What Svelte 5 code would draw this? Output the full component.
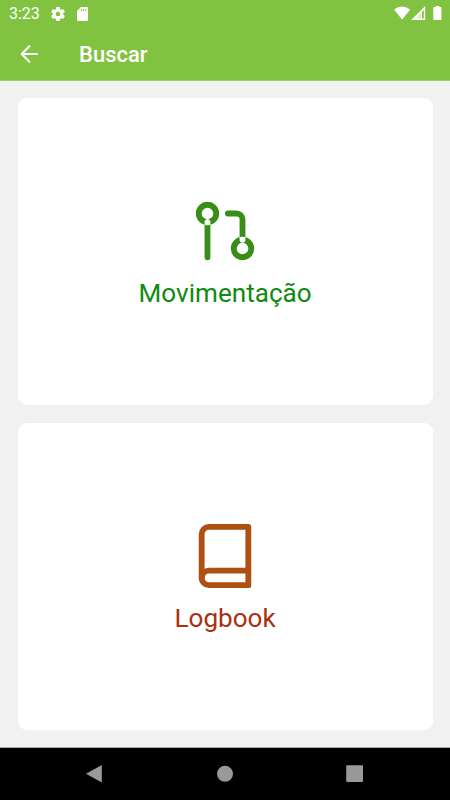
<script lang="ts">
    const title = "Buscar";
    const time = "3:23";
</script>

<div class="screen">
    <header>
        <div class="status">
            <span class="time">{time}</span>
            <svg class="gear" width="16" height="16" viewBox="1 1 22 22">
                <path
                    d="M19.14 12.94c.04-.3.06-.61.06-.94s-.02-.64-.07-.94l2.03-1.58a.49.49 0 0 0 .12-.61l-1.92-3.32a.49.49 0 0 0-.59-.22l-2.39.96a7 7 0 0 0-1.62-.94l-.36-2.54a.48.48 0 0 0-.48-.41h-3.84a.48.48 0 0 0-.47.41l-.36 2.54a7.4 7.4 0 0 0-1.62.94l-2.39-.96a.48.48 0 0 0-.59.22L2.74 8.87a.47.47 0 0 0 .12.61l2.03 1.58a6 6 0 0 0-.02 1.88l-2.03 1.58a.49.49 0 0 0-.12.61l1.92 3.32c.12.22.37.29.59.22l2.39-.96c.5.38 1.03.7 1.62.94l.36 2.54c.05.24.24.41.48.41h3.84c.24 0 .44-.17.47-.41l.36-2.54a7 7 0 0 0 1.62-.94l2.39.96c.22.08.47 0 .59-.22l1.92-3.32a.47.47 0 0 0-.12-.61zM12 15.2a3.2 3.2 0 1 1 0-6.4 3.2 3.2 0 0 1 0 6.4z"
                />
            </svg>
            <svg class="sd" width="11" height="14" viewBox="0 0 11 14">
                <path
                    fill-rule="evenodd"
                    d="M4 0h6a1 1 0 0 1 1 1v12a1 1 0 0 1-1 1H1a1 1 0 0 1-1-1V4zM4 2v2.2h1V2zM6.1 2v2.2h1V2zM8.2 2v2.2h1V2z"
                />
            </svg>
            <svg class="signals" width="48" height="15" viewBox="0 0 48 15">
                <path d="M0 3.6Q8 -2.6 16.2 3.6L8.1 13.6z" />
                <path fill-rule="evenodd" d="M31.2 0v14h-14zM29.8 4v8.6h-1.9V6z" />
                <path class="weak" d="M27 6.5v6.1h-4.6z" />
                <path d="M40.1 1H41.6V0h3.8v1h1.2q.8 0 .8.8v11.4q0 .8-.8.8h-6.5q-.8 0-.8-.8V1.8q0-.8.8-.8z" />
            </svg>
        </div>
        <div class="toolbar">
            <svg class="back" width="18" height="18" viewBox="0 0 18 18">
                <path d="M17 9H1.7M9.4 1.2L1.7 9l7.7 7.8" />
            </svg>
            <h1>{title}</h1>
        </div>
    </header>

    <main>
        <button class="card movement">
            <svg width="70" height="70" viewBox="0 0 24 24">
                <path
                    fill-rule="evenodd"
                    d="M2 6a4 4 0 1 0 8 0a4 4 0 1 0-8 0zM4 6a2 2 0 1 0 4 0a2 2 0 1 0-4 0zM5 9a1 1 0 0 1 2 0v12a1 1 0 0 1-2 0z"
                />
                <path
                    fill-rule="evenodd"
                    d="M14 18a4 4 0 1 0 8 0a4 4 0 1 0-8 0zM16 18a2 2 0 1 0 4 0a2 2 0 1 0-4 0zM13 5h3a3 3 0 0 1 3 3v7a1 1 0 0 1-2 0V8a1 1 0 0 0-1-1h-3a1 1 0 0 1 0-2z"
                />
            </svg>
            <span>Movimentação</span>
        </button>
        <button class="card logbook">
            <svg width="70" height="70" viewBox="0 0 24 24">
                <path d="M4 19.5A2.5 2.5 0 0 1 6.5 17H20" />
                <path d="M6.5 2H20v20H6.5A2.5 2.5 0 0 1 4 19.5v-15A2.5 2.5 0 0 1 6.5 2z" />
            </svg>
            <span>Logbook</span>
        </button>
    </main>

    <nav>
        <svg width="18" height="20" viewBox="0 0 18 20">
            <path d="M15.8 1v17.6L0 9.8z" />
        </svg>
        <svg width="18" height="18" viewBox="0 0 18 18">
            <circle cx="9" cy="8.8" r="8" />
        </svg>
        <svg width="18" height="18" viewBox="0 0 18 18">
            <rect x=".2" y=".2" width="16.8" height="16.8" rx="1" />
        </svg>
    </nav>
</div>

<style>
    :global(body) {
        margin: 0;
    }
    .screen {
        display: flex;
        flex-direction: column;
        width: 450px;
        height: 800px;
        box-sizing: border-box;
        background: #f1f1f1;
        font-family: Roboto, sans-serif;
    }
    header {
        height: 81px;
        flex: none;
        box-sizing: border-box;
        background: #81c341;
        border-bottom: 1px solid #98cf66;
        color: white;
    }
    .status {
        display: flex;
        align-items: center;
        height: 27px;
        padding: 0 8px 0 9px;
    }
    .status svg {
        fill: white;
    }
    .status .weak {
        fill: #81c341;
        opacity: 0.3;
    }
    .time {
        width: 41px;
        font-size: 16px;
        line-height: 27px;
    }
    .sd {
        margin-left: 11px;
    }
    .signals {
        margin-left: auto;
    }
    .toolbar {
        display: flex;
        align-items: center;
        height: 53px;
        padding-left: 20px;
    }
    .back {
        fill: none;
        stroke: white;
        stroke-width: 2;
        stroke-linecap: round;
        stroke-linejoin: round;
    }
    h1 {
        margin: 2px 0 0 41px;
        font-size: 22px;
        font-weight: 500;
        line-height: 28px;
    }
    main {
        display: flex;
        flex: 1;
        flex-direction: column;
        gap: 18px;
        padding: 17px 17.4px 17px 17.6px;
        border-bottom: 1px solid #a8a8a8;
    }
    .card {
        display: flex;
        flex: 1;
        flex-direction: column;
        align-items: center;
        justify-content: center;
        padding: 2px 0 0;
        border: none;
        border-radius: 9px;
        background: white;
        font-family: inherit;
        font-size: 26.1px;
    }
    .card span {
        margin-top: 12.5px;
        line-height: 31px;
    }
    .movement {
        color: #108a10;
    }
    .movement svg {
        fill: #388e18;
    }
    .logbook {
        color: #a83210;
    }
    .logbook svg {
        fill: none;
        stroke: #ae5012;
        stroke-width: 2;
        stroke-linecap: round;
        stroke-linejoin: round;
    }
    nav {
        display: flex;
        align-items: center;
        justify-content: space-between;
        height: 52px;
        flex: none;
        box-sizing: border-box;
        padding: 0 86px;
        background: black;
    }
    nav svg {
        fill: #999;
    }
</style>
